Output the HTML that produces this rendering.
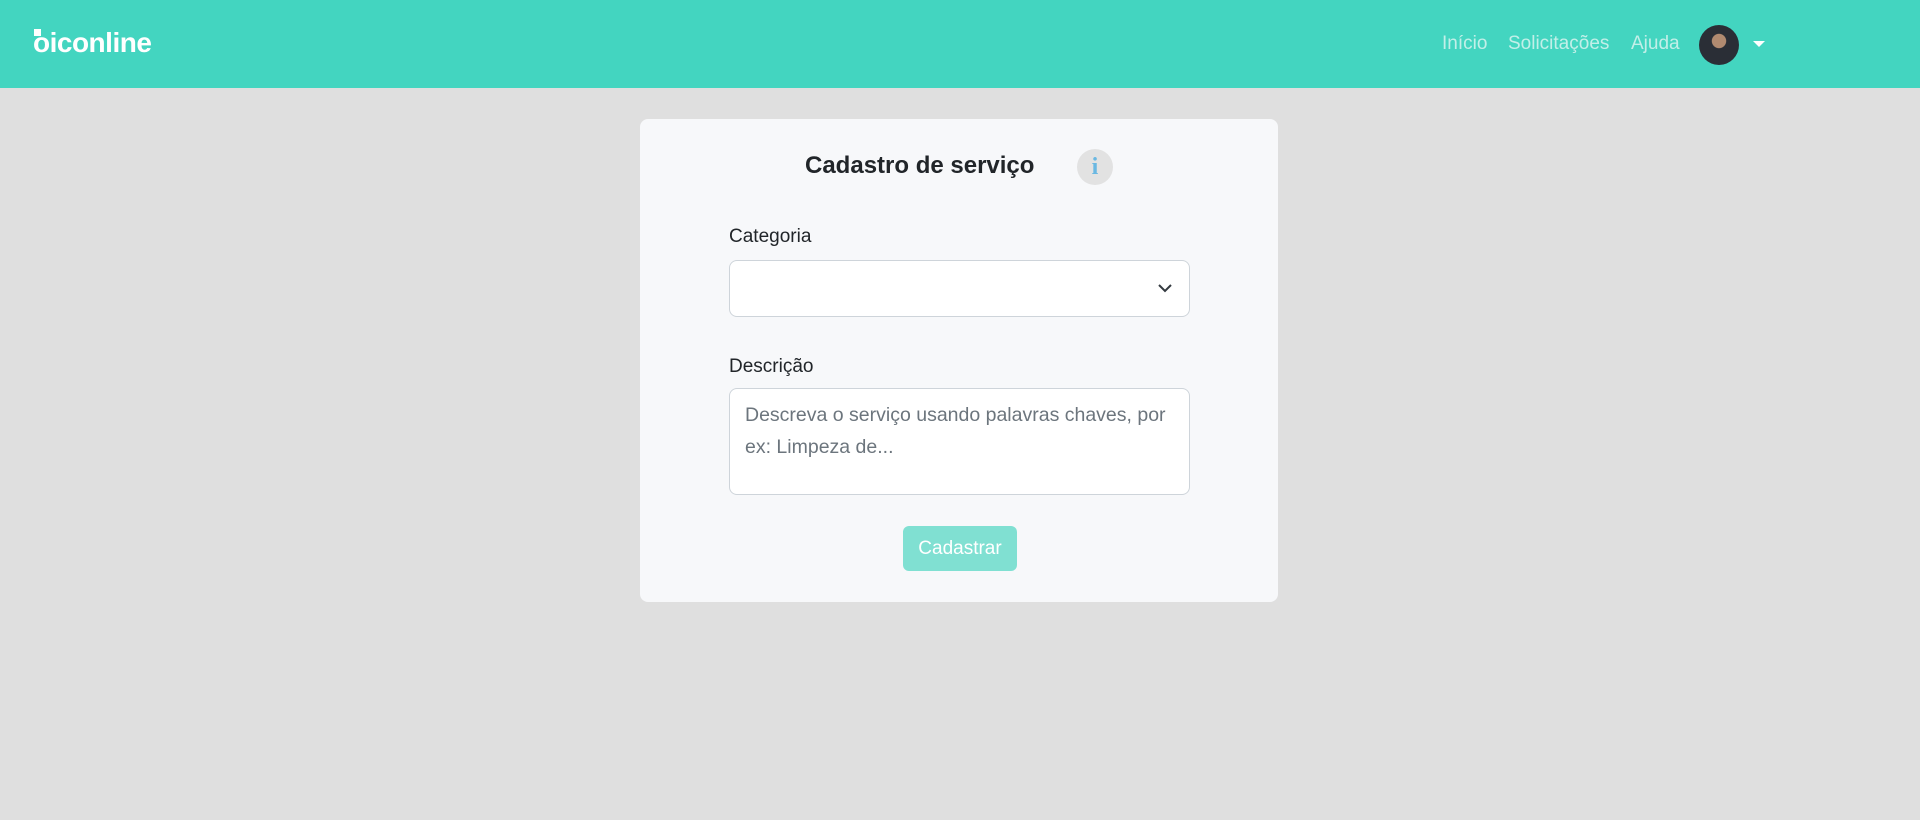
<!DOCTYPE html>
<html><head><meta charset="utf-8"><style>
*{box-sizing:border-box;margin:0;padding:0}
body{width:1920px;height:820px;background:#dfdfdf;font-family:"Liberation Sans",sans-serif;position:relative;overflow:hidden}
.nav{position:absolute;left:0;top:0;width:1920px;height:88px;background:#43d5c0}
.logo{position:absolute;left:33px;top:27px;color:#fff;font-weight:bold;font-size:28px;letter-spacing:-0.5px}
.sq{position:absolute;left:34px;top:29px;width:7px;height:7px;background:#fff}
.nl{position:absolute;top:33px;font-size:19px;color:#c2efe8}
.av{position:absolute;left:1699px;top:25px;width:40px;height:40px;border-radius:50%;background:radial-gradient(circle at 50% 40%,#b08a70 0 22%,#2a2e36 24% 100%)}
.caret{position:absolute;left:1753px;top:41px;width:0;height:0;border-left:6px solid transparent;border-right:6px solid transparent;border-top:6px solid #fff}
.card{position:absolute;left:640px;top:119px;width:638px;height:483px;background:#f7f8fa;border-radius:8px}
.t{position:absolute;left:805px;top:152px;font-size:24px;font-weight:600;color:#212529}
.info{position:absolute;left:1077px;top:149px;width:36px;height:36px;border-radius:50%;background:#e2e2e2;color:#6ab8e2;font:bold 24px "Liberation Serif",serif;text-align:center;line-height:36px}
.lab{position:absolute;left:729px;font-size:19px;color:#212529}
.sel{position:absolute;left:729px;top:260px;width:461px;height:57px;background:#fff;border:1px solid #ced4da;border-radius:8px}
.ta{position:absolute;left:729px;top:388px;width:461px;height:107px;background:#fff;border:1px solid #ced4da;border-radius:8px;padding:10px 15px;font-size:19.5px;line-height:32px;color:#6c757d}
.btn{position:absolute;left:903px;top:526px;width:114px;height:45px;background:#80e0d2;border-radius:6px;color:#fff;font-size:19px;text-align:center;line-height:45px}
</style></head><body>
<div class="nav">
<div class="logo">oiconline</div><div class="sq"></div>
<div class="nl" style="left:1442px">Início</div>
<div class="nl" style="left:1508px">Solicitações</div>
<div class="nl" style="left:1631px">Ajuda</div>
<div class="av"></div><div class="caret"></div>
</div>
<div class="card"></div>
<div class="t">Cadastro de serviço</div>
<div class="info">i</div>
<div class="lab" style="top:226px">Categoria</div>
<div class="sel"><svg style="position:absolute;right:17px;top:22px" width="14" height="10" viewBox="0 0 14 10"><path d="M1 2l6 6 6-6" fill="none" stroke="#343a40" stroke-width="2"/></svg></div>
<div class="lab" style="top:356px">Descrição</div>
<div class="ta">Descreva o serviço usando palavras chaves, por ex: Limpeza de...</div>
<div class="btn">Cadastrar</div>
</body></html>
